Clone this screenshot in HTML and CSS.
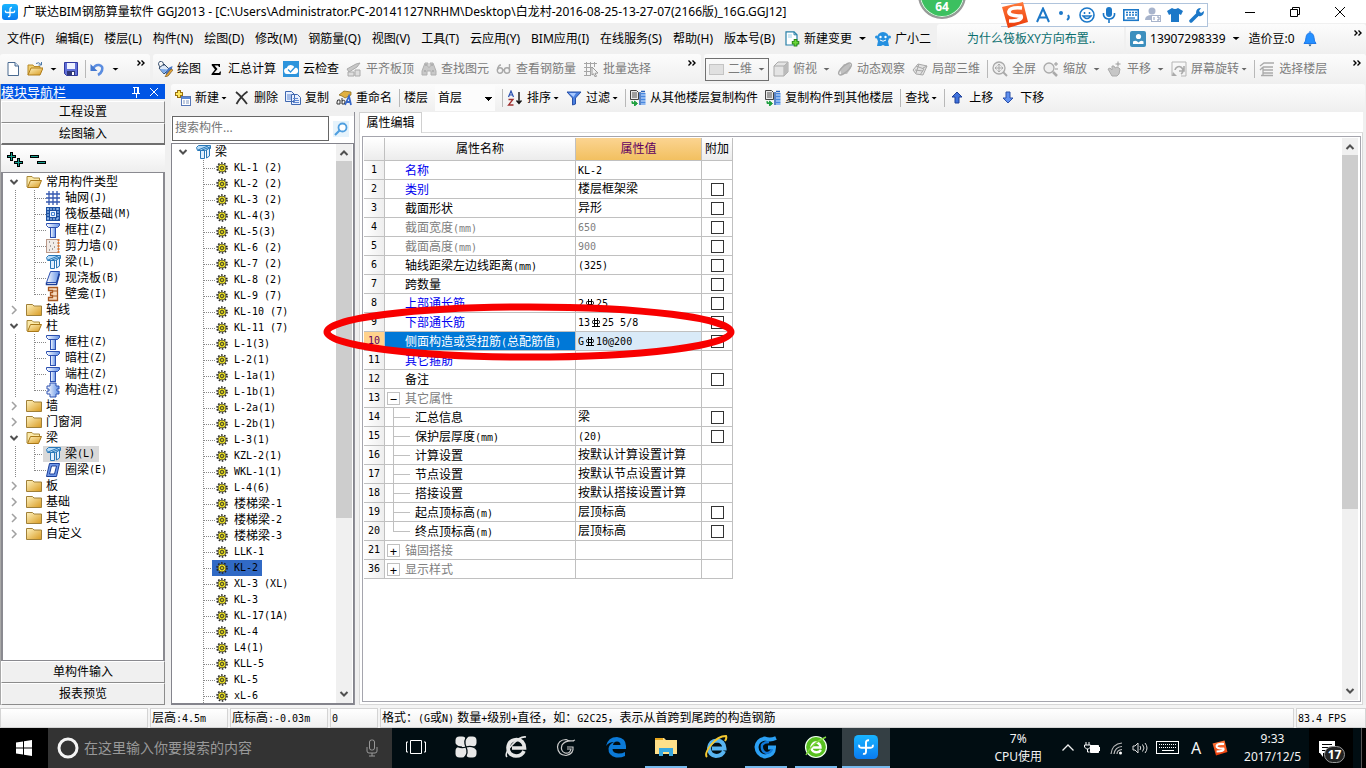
FILE: index.html
```html
<!DOCTYPE html>
<html lang="zh-CN">
<head>
<meta charset="utf-8">
<title>广联达BIM钢筋算量软件 GGJ2013</title>
<link rel="stylesheet" href="styles.css">
</head>
<body>
<svg class="defs" aria-hidden="true">
  <defs>
    <linearGradient id="gold" x1="0" y1="0" x2="1" y2="1"><stop offset="0" stop-color="#fff3c0"/><stop offset="1" stop-color="#d89a20"/></linearGradient>
    <linearGradient id="blue" x1="0" y1="0" x2="1" y2="0"><stop offset="0" stop-color="#fff"/><stop offset="1" stop-color="#5f8fe6"/></linearGradient>
    <linearGradient id="sky" x1="0" y1="0" x2="0" y2="1"><stop offset="0" stop-color="#18b4ff"/><stop offset="1" stop-color="#0a7bf0"/></linearGradient>
    <linearGradient id="flame" x1="0" y1="0" x2="0" y2="1"><stop offset="0" stop-color="#ff7a3c"/><stop offset="1" stop-color="#ea3a08"/></linearGradient>
  </defs>
  <symbol id="app" viewBox="0 0 16 16"><rect width="16" height="16" rx="3" fill="url(#sky)"/><path d="M8 10.500V5Q8 3.300 10 3.500M3.500 6.500Q3 8.500 5 8.500H11Q13 8.500 12.500 6.500M8 8.500V11Q8 13 6 12.500" fill="none" stroke="#fff" stroke-width="1.300"/></symbol>
  <symbol id="new" viewBox="0 0 16 16"><path d="M3 1.500h7l3.500 3.500v9.500H3z" fill="#fff" stroke="#4a6a90"/><path d="M10 1.500v3.500h3.500" fill="#cfe0f4" stroke="#4a6a90"/></symbol>
  <symbol id="open" viewBox="0 0 16 16"><path d="M1 14V4h5l1 1.500h6V7" fill="#f0cf70" stroke="#b88a28"/><path d="M1 14l3-7h12l-3 7z" fill="url(#gold)" stroke="#b07c18"/><path d="M9 2.500q3-2 5 1M14.500 1v3h-3" fill="none" stroke="#4b78a8"/></symbol>
  <symbol id="save" viewBox="0 0 16 16"><path d="M1.500 1.500h13v13h-11l-2-2z" fill="#6070d8" stroke="#3038a0"/><rect x="4" y="2" width="8" height="6" fill="#eef2ff"/><rect x="4" y="10" width="8" height="4.500" fill="#303878"/><rect x="9" y="11" width="2" height="3" fill="#fff"/></symbol>
  <symbol id="undo" viewBox="0 0 16 16"><path d="M4 8Q6 3.500 10 4Q14.500 5 13 9.500Q12 12.500 9 14" fill="none" stroke="#5b8de0" stroke-width="2.600"/><path d="M1.500 3v7h7z" fill="#4478d0"/></symbol>
  <symbol id="paint" viewBox="0 0 16 16"><path d="M2 7l5-4 5 5-5 5z" fill="#dce8f8" stroke="#304868"/><path d="M3 6Q0 2 3 .5T7 5" fill="none" stroke="#304868"/><path d="M3 8l8 .5-4.500 4z" fill="#7aa8e8"/><path d="M15.500 5q-6 2-7 8l2 2q4-2 5-10z" fill="#4878c8"/><path d="M9 14l5-6 2 1-5 6-3 1z" fill="#e8a838" stroke="#705020" stroke-width=".6"/></symbol>
  <symbol id="sigma" viewBox="0 0 16 16"><path d="M4 3h8v3h-1l-1-1.500H6.500L9.500 8l-3.500 4h5l1-1.500h1l-.5 3.500H3.500v-1L7 8.500 3.500 4z" fill="#000"/></symbol>
  <symbol id="cloud" viewBox="0 0 16 16"><rect width="16" height="16" fill="#2d94dc"/><path d="M4.500 13a3 3 0 0 1-.8-6 4.300 4.300 0 0 1 8-.5 3.200 3.200 0 0 1 .3 6.500z" fill="#fff"/><path d="M5 8.500l2.500 2.500L13 5" fill="none" stroke="#2d94dc" stroke-width="1.300"/></symbol>
  <symbol id="slab" viewBox="0 0 16 16"><path d="M1 8l9-5 4-1-3 4-8 5z" fill="#c8c8c8" stroke="#aaa"/><path d="M2 11h6v4H2zM9 9h5v6H9z" fill="#ddd" stroke="#aaa"/></symbol>
  <symbol id="binoc" viewBox="0 0 16 16"><path d="M4 2h3v4h2V2h3l3 8v4h-5v-4H6v4H1v-4z" fill="#c8c8c8" stroke="#b0b0b0"/><path d="M3 10h2M11 10h2M4 4h2M10 4h2" stroke="#999"/></symbol>
  <symbol id="glasses" viewBox="0 0 16 16"><g fill="none" stroke="#a8a8a8" stroke-width="1.400"><circle cx="4" cy="9.500" r="2.700"/><circle cx="11" cy="9.500" r="2.700"/><path d="M1.500 9Q2 4 5 4M13.500 10V3M7 9h1.500"/></g></symbol>
  <symbol id="batch" viewBox="0 0 16 16"><path d="M1 2.500h13M1 6.500h8M1 10.500h7M1 14.500h7M3.500 1v14M7.500 1v14M11.500 1v5" stroke="#a5a5a5" fill="none"/><path d="M9 6l6 6-3 .3 1.500 3-1.500.5-1.500-3L9 14z" fill="#f4f4f4" stroke="#999"/></symbol>
  <symbol id="cube" viewBox="0 0 16 16"><path d="M1 5l4-4h10v10l-4 4H1z" fill="#e4e4e4" stroke="#aaa"/><path d="M1 5h10v10M11 5l4-4" fill="none" stroke="#aaa"/><path d="M11 5l4-4v10l-4 4z" fill="#bbb"/></symbol>
  <symbol id="orbit" viewBox="0 0 16 16"><path d="M3 8l4-5h6l1 4-4 6H4z" fill="#c0c0c0"/><ellipse cx="8" cy="8" rx="8" ry="3" transform="rotate(-42 8 8)" fill="none" stroke="#aaa" stroke-width="1.300"/></symbol>
  <symbol id="part3" viewBox="0 0 16 16"><path d="M1 9l5-6 9 2-4 9-7-1z" fill="#e2e2e2" stroke="#a8a8a8"/><path d="M4 5l8 3-4 6M7 3L4 12M15 5l-4 2M3 9l8 1" fill="none" stroke="#a8a8a8"/></symbol>
  <symbol id="full" viewBox="0 0 16 16"><circle cx="7" cy="7" r="6" fill="#eee" stroke="#aaa" stroke-width="1.300"/><path d="M7 3v8M3 7h8M5.500 4.500L7 3l1.500 1.500M5.500 9.500L7 11l1.500-1.500M4.500 5.500L3 7l1.500 1.500M9.500 5.500L11 7 9.500 8.500" fill="none" stroke="#aaa"/><path d="M11 11l4 4" stroke="#aaa" stroke-width="2"/></symbol>
  <symbol id="zoom" viewBox="0 0 16 16"><circle cx="6" cy="7" r="5" fill="#eee" stroke="#aaa" stroke-width="1.300"/><path d="M10 11l4 4" stroke="#aaa" stroke-width="2.500"/><path d="M11 3h4M13 1v4M12 8h3" stroke="#999"/></symbol>
  <symbol id="hand" viewBox="0 0 16 16"><path d="M1 8l2-1 2 2V5h2l1 2 2-1 2 1 1 1-1 5-2 2H5z" fill="#c6c6c6" stroke="#aaa"/><path d="M11 .5v5M8.500 3h5" stroke="#999"/></symbol>
  <symbol id="rot" viewBox="0 0 16 16"><path d="M1 1h14v14h-5M1 15V1" fill="none" stroke="#b5b5b5"/><path d="M4 9a4 4 0 1 1 6 4M13 5v5h-5" fill="none" stroke="#aaa" stroke-width="1.600"/><path d="M1 15l1-4 4 4z" fill="#aaa"/></symbol>
  <symbol id="floors" viewBox="0 0 16 16"><path d="M1 5l4-3h10M4 6h10M4 9h10M1 9l3-3M4 12h10M2 14.500h12M4 6v8" fill="none" stroke="#aaa" stroke-width="1.300"/></symbol>
  <symbol id="doc" viewBox="0 0 16 16"><path d="M2 .8h8l3 3V14H2z" fill="#fff" stroke="#2880a8" stroke-width="1.200"/><path d="M4 3h4v4H4z" fill="#cfe8f4"/><path d="M10 .8v3h3" fill="none" stroke="#2880a8"/><path d="M11.500 8v7.500M7.800 11.700h7.500" stroke="#288818" stroke-width="3.600"/><path d="M11.500 9v5.500M8.800 11.700h5.500" stroke="#6bd838" stroke-width="1.800"/></symbol>
  <symbol id="mascot" viewBox="0 0 16 16"><circle cx="8" cy="7" r="6" fill="#2590e0"/><circle cx="1.500" cy="6" r="1.500" fill="#2590e0"/><circle cx="14.500" cy="6" r="1.500" fill="#2590e0"/><path d="M3 10h10l1 5h-4l-2-1-2 1H2z" fill="#2590e0"/><circle cx="5.500" cy="6" r="1.200" fill="#fff"/><circle cx="10.500" cy="6" r="1.200" fill="#fff"/><path d="M5 9q3 2.500 6 0" fill="none" stroke="#fff"/></symbol>
  <symbol id="user" viewBox="0 0 16 16"><rect width="16" height="16" rx="2" fill="#3c8fbe"/><circle cx="8.500" cy="5.500" r="2.600" fill="#fff"/><path d="M3 13v-2.500q3-2 5.500 1 2.500-3 5-1V13z" fill="#fff"/></symbol>
  <symbol id="bell" viewBox="0 0 16 16"><path d="M8 0v2M2 12.500q2-2 2-6Q4.500 2 8 2t4 4.500q0 4 2 6z" fill="#2590ff" stroke="#1f78e8"/><path d="M6.500 13.500h3l-1.500 2z" fill="#0f4878"/></symbol>
  <symbol id="add" viewBox="0 0 16 16"><path d="M4 0v8M0 4h8" stroke="#987010" stroke-width="4"/><path d="M4 1v6M1 4h6" stroke="#ffe860" stroke-width="2"/><rect x="6.500" y="6.500" width="9" height="9" fill="#fff" stroke="#5878b8"/><path d="M7 8h8" stroke="#5888d8" stroke-width="2"/><path d="M8 11h2M11 11h3M8 13h2M11 13h3" stroke="#8098c0"/></symbol>
  <symbol id="del" viewBox="0 0 16 16"><path d="M2 2q5 4 11 12M13.500 1.500Q7 6 2.500 14" fill="none" stroke="#333" stroke-width="1.800"/></symbol>
  <symbol id="copy" viewBox="0 0 16 16"><path d="M.5 1.500h6l3 3v7h-9zM6.500 4.500h6l3 3v7h-9z" fill="#e8f0ff" stroke="#4068b0"/><path d="M2 5h4M2 7h4M2 9h4M8 8.500h5M8 10.500h6M8 12.500h6" stroke="#6088d0"/></symbol>
  <symbol id="rename" viewBox="0 0 16 16"><path d="M3 5l5-4 7 1v3l-6 3-3-2z" fill="#e0b040" stroke="#806010" stroke-width=".7"/><path d="M1 12q0-3 3-2v4H1zM6 8v6M6 11q3-2 3 1t-3 2" fill="none" stroke="#333"/><path d="M9 15l4-9 2 9M10.500 12H15" fill="none" stroke="#3868c8" stroke-width="1.800"/></symbol>
  <symbol id="sort" viewBox="0 0 16 16"><path d="M1.500 7l2.500-6 2.500 6M2.500 5h3" fill="none" stroke="#2850b0" stroke-width="1.200"/><path d="M1.500 9.500H6L1.500 15H6.500" fill="none" stroke="#a03030" stroke-width="1.300"/><path d="M12 2v11M9.500 10.500l2.500 3 2.500-3" fill="none" stroke="#111" stroke-width="1.400"/></symbol>
  <symbol id="filter" viewBox="0 0 16 16"><path d="M1 2h14l-5.500 6v6l-3 1V8z" fill="#4a80e0" stroke="#2850a8"/><path d="M3 3h7L7.500 7z" fill="#a8c8ff"/></symbol>
  <symbol id="fcopy" viewBox="0 0 16 16"><path d="M.5.500h6l2 2v7h-8z" fill="#e8e8e8" stroke="#444"/><path d="M2 3h5M2 5h5M2 7h5" stroke="#555"/><path d="M11 1.500h4M10 2v13" stroke="#2860b8" stroke-width="1.500"/><path d="M11 3h4.500v12H11z" fill="#4888e0"/><path d="M11 5h5M11 8h5M11 11h5M11 14h5" stroke="#d8e8ff"/><path d="M2 11v2.500h3M4.500 11l3 2.500-3 2.500z" fill="#20a040" stroke="#20a040"/></symbol>
  <symbol id="up" viewBox="0 0 16 16"><path d="M8 2l5 5h-3v6H6V7H3z" fill="#3f72dc" stroke="#1c3f98"/></symbol>
  <symbol id="down" viewBox="0 0 16 16"><path d="M8 13L3 8h3V2h4v6h3z" fill="#5f90f0" stroke="#2c50a8"/></symbol>
  <symbol id="pin" viewBox="0 0 16 16"><path d="M5 3.500h6M6.500 3v6M9.500 3v6M10.500 3v6M4 9.500h8M8.500 9v5" stroke="#fff" fill="none"/></symbol>
  <symbol id="cross" viewBox="0 0 16 16"><path d="M4 4l8 8M12 4l-8 8" stroke="currentColor"/></symbol>
  <symbol id="fopen" viewBox="0 0 16 16"><path d="M1 13V2.500h5l1.500 1.500h6V7" fill="#fbe9a8" stroke="#a88838"/><path d="M1.500 13.500l3-7h11l-3 7z" fill="url(#gold)" stroke="#a87818"/></symbol>
  <symbol id="fclose" viewBox="0 0 16 16"><path d="M.5 13.500v-11h6L8 4h7.500v9.500z" fill="url(#gold)" stroke="#a08038"/></symbol>
  <symbol id="axis" viewBox="0 0 16 16"><path d="M4 1v14M8 1v14M12 1v14M1 4h14M1 8h14M1 12h14" stroke="#3558b0" stroke-width="1.300"/></symbol>
  <symbol id="raft" viewBox="0 0 16 16"><rect x="1" y="1" width="14" height="14" fill="#1c50a0"/><path d="M2 3h12M2 13h12M3 2v12M13 2v12" stroke="#b8d8ff" stroke-dasharray="2 1"/><rect x="5" y="5" width="6" height="6" fill="#eaf4ff"/><path d="M6.500 6.500h3v3h-3z" fill="none" stroke="#4080d0"/></symbol>
  <symbol id="col" viewBox="0 0 16 16"><path d="M1.500 1.500h13v2l-2 2h-9l-2-2z" fill="url(#blue)" stroke="#2c50b0"/><rect x="5.500" y="5.500" width="5" height="10" fill="url(#blue)" stroke="#2c50b0"/></symbol>
  <symbol id="shear" viewBox="0 0 16 16"><rect x="1.500" y="1.500" width="12" height="13" fill="#f2ece8" stroke="#b89888"/><path d="M13.500 1v14" stroke="#d87838" stroke-width="2" stroke-dasharray="2 1"/><path d="M4 4h1M8 5h1M5 8h1M9 9h1M4 12h1M7 11h1" stroke="#555"/></symbol>
  <symbol id="beam" viewBox="0 0 16 16"><path d="M1.500 3.500l2-2h12v3l-5 2h-8z" fill="#b8dcf8" stroke="#2878b8"/><path d="M3 6l10-4M7 6l8-3" stroke="#2878b8"/><path d="M5.500 6.500h4v8h-4zM11.500 6l3-2v8l-3 2z" fill="#dff0ff" stroke="#2878b8"/></symbol>
  <symbol id="plate" viewBox="0 0 16 16"><path d="M5.500 1.500h9l-3 11h-10z" fill="url(#blue)" stroke="#2c50b0"/><path d="M1.500 12.500v2h10l3-11" fill="none" stroke="#1c3f98" stroke-width="1.500"/></symbol>
  <symbol id="niche" viewBox="0 0 16 16"><path d="M3.500 1.500h9v13h-9v-3h4v-2h-2v-3h2v-2h-4z" fill="#f8dcc0" stroke="#a85820" stroke-width="1.300"/><path d="M8 5h4M8 10h4" stroke="#a85820"/></symbol>
  <symbol id="ccol" viewBox="0 0 16 16"><path d="M5 1h6v3h3v3h-2v2h2v3h-3v3H5v-3H2V9h2V7H2V4h3z" fill="url(#blue)" stroke="#2c50b0"/></symbol>
  <symbol id="ring" viewBox="0 0 16 16"><path d="M4.500 1.500h10l-3 13h-10z" fill="#6f98e8" stroke="#1c3f98"/><path d="M6.500 4h5L9.500 12h-5z" fill="#fff" stroke="#1c3f98"/></symbol>
  <symbol id="gear" viewBox="0 0 12 12"><circle cx="6" cy="6" r="5" fill="none" stroke="#222" stroke-width="1.600" stroke-dasharray="1.600 1.540"/><circle cx="6" cy="6" r="4" fill="#fff21c" stroke="#333" stroke-width=".7"/><path d="M6 2v8M2 6h8M3.500 3.500l5 5M8.500 3.500l-5 5" stroke="#554" stroke-width=".6"/><circle cx="6" cy="6" r="1.500" fill="#fff21c" stroke="#222" stroke-width=".8"/></symbol>
  <symbol id="rebar" viewBox="0 0 12 12"><path d="M4.500 2v8M7.500 2v8M2 10.500h8" stroke="currentColor" fill="none"/><rect x="2.500" y="4.500" width="7" height="3" rx="1" stroke="currentColor" fill="none"/></symbol>
  <symbol id="mag" viewBox="0 0 16 16"><rect width="16" height="16" fill="#e6f3fb"/><circle cx="9.500" cy="6.500" r="4" fill="#fff" stroke="#4f9fe0" stroke-width="1.800"/><path d="M6.500 9.500L2 14" stroke="#4f9fe0" stroke-width="2.200"/></symbol>
  <symbol id="cu" viewBox="0 0 16 16"><path d="M4.500 10L8 6.500l3.500 3.500" fill="none" stroke="#505050" stroke-width="2"/></symbol>
  <symbol id="cd" viewBox="0 0 16 16"><path d="M4.500 6L8 9.500 11.500 6" fill="none" stroke="#505050" stroke-width="2"/></symbol>
  <symbol id="cr" viewBox="0 0 16 16"><path d="M6 4l4 4-4 4" fill="none" stroke="#a0a0a0" stroke-width="1.500"/></symbol>
  <symbol id="more" viewBox="0 0 8 8"><path d="M.5 1.500L3 4 .5 6.500M4.500 1.500L7 4 4.500 6.500" fill="none" stroke="#000" stroke-width="1.400"/></symbol>
  <symbol id="sogou" viewBox="0 0 28 28"><path d="M1 6l21-5 5 20-20 6z" fill="url(#flame)"/><path d="M21 7Q9 6 8 10.500T20 15q2 5-12 5" fill="none" stroke="#fff" stroke-width="3.600"/></symbol>
</svg>

<div class="app">
  <header class="title">
    <svg class="i16"><use href="#app"/></svg>
    <h1>广联达BIM钢筋算量软件 GGJ2013 - [C:\Users\Administrator.PC-20141127NRHM\Desktop\白龙村-2016-08-25-13-27-07(2166版)_16G.GGJ12]</h1>
    <div class="wins">
      <button aria-label="最小化"><svg class="i12" viewBox="0 0 12 12"><path d="M1 6.500h10" stroke="#000"/></svg></button>
      <button aria-label="还原"><svg class="i12" viewBox="0 0 12 12"><path d="M1.500 3.500h7v7h-7zM3.500 3.500v-2h7v7h-2" fill="none" stroke="#000"/></svg></button>
      <button aria-label="关闭"><svg class="i12" viewBox="0 0 12 12"><path d="M1 1l10 10M11 1L1 11" stroke="#000"/></svg></button>
    </div>
  </header>

  <nav class="menu">
    <button>文件(F)</button><button>编辑(E)</button><button>楼层(L)</button><button>构件(N)</button><button>绘图(D)</button><button>修改(M)</button><button>钢筋量(Q)</button><button>视图(V)</button><button>工具(T)</button><button>云应用(Y)</button><button>BIM应用(I)</button><button>在线服务(S)</button><button>帮助(H)</button><button>版本号(B)</button>
    <button class="tb"><svg class="i16"><use href="#doc"/></svg>新建变更<i class="car"></i></button>
    <button class="tb"><svg class="i16"><use href="#mascot"/></svg>广小二</button>
    <div class="strip news"><a href="#">为什么筏板XY方向布置..</a></div>
    <div class="strip acct">
      <button class="tb"><svg class="i16"><use href="#user"/></svg>13907298339<i class="car"></i></button>
      <span>造价豆:0</span>
      <button class="tb" aria-label="通知"><svg class="i16"><use href="#bell"/></svg></button>
      <svg class="more"><use href="#more"/></svg>
    </div>
  </nav>

  <div class="bars">
    <div class="strip g1">
      <button class="tb" aria-label="新建"><svg class="i16"><use href="#new"/></svg></button>
      <button class="tb" aria-label="打开"><svg class="i16"><use href="#open"/></svg><i class="car"></i></button>
      <button class="tb" aria-label="保存"><svg class="i16"><use href="#save"/></svg></button>
      <i class="sep"></i>
      <button class="tb" aria-label="撤销"><svg class="i16"><use href="#undo"/></svg><i class="car"></i></button>
      <svg class="more"><use href="#more"/></svg>
    </div>
    <div class="strip g2">
      <button class="tb"><svg class="i16"><use href="#paint"/></svg>绘图</button>
      <button class="tb"><svg class="i16"><use href="#sigma"/></svg>汇总计算</button>
      <button class="tb"><svg class="i16"><use href="#cloud"/></svg>云检查</button>
      <button class="tb off"><svg class="i16"><use href="#slab"/></svg>平齐板顶</button>
      <button class="tb off"><svg class="i16"><use href="#binoc"/></svg>查找图元</button>
      <button class="tb off"><svg class="i16"><use href="#glasses"/></svg>查看钢筋量</button>
      <button class="tb off"><svg class="i16"><use href="#batch"/></svg>批量选择</button>
      <svg class="more"><use href="#more"/></svg>
    </div>
    <div class="strip g3">
      <button class="tb off view"><i class="swatch"></i>二维<i class="car"></i></button>
      <button class="tb off"><svg class="i16"><use href="#cube"/></svg>俯视<i class="car"></i></button>
      <button class="tb off"><svg class="i16"><use href="#orbit"/></svg>动态观察</button>
      <button class="tb off"><svg class="i16"><use href="#part3"/></svg>局部三维</button>
      <i class="sep"></i>
      <button class="tb off"><svg class="i16"><use href="#full"/></svg>全屏</button>
      <button class="tb off"><svg class="i16"><use href="#zoom"/></svg>缩放<i class="car"></i></button>
      <button class="tb off"><svg class="i16"><use href="#hand"/></svg>平移<i class="car"></i></button>
      <button class="tb off tight"><svg class="i16"><use href="#rot"/></svg>屏幕旋转<i class="car"></i></button>
      <i class="sep"></i>
      <button class="tb off"><svg class="i16"><use href="#floors"/></svg>选择楼层</button>
      <svg class="more"><use href="#more"/></svg>
    </div>
  </div>

  <main class="work">
    <aside class="nav">
      <div class="navhead"><span>模块导航栏</span><button aria-label="固定"><svg class="i16"><use href="#pin"/></svg></button><button aria-label="关闭"><svg class="i16"><use href="#cross"/></svg></button></div>
      <button class="navbtn">工程设置</button>
      <button class="navbtn down">绘图输入</button>
      <div class="exp">
        <button aria-label="全部展开"><svg viewBox="0 0 18 16"><path d="M4.500 0v9M0 4.500h9M11.500 6v9M7 10.500h9" stroke="#000" stroke-width="3"/><path d="M4.500 1v7M1 4.500h7M11.500 7v7M8 10.500h7" stroke="#18a090"/></svg></button>
        <button aria-label="全部折叠"><svg viewBox="0 0 18 16"><path d="M0 4.500h9M7 10.500h9" stroke="#000" stroke-width="3"/><path d="M1 4.500h7M8 10.500h7" stroke="#18a090"/></svg></button>
      </div>
      <ul class="tree modules">
        <li class="root"><svg class="i16"><use href="#cd"/></svg><svg class="i16"><use href="#fopen"/></svg>常用构件类型</li>
        <li class="kid"><span><svg class="i16"><use href="#axis"/></svg>轴网<b>(J)</b></span></li>
        <li class="kid"><span><svg class="i16"><use href="#raft"/></svg>筏板基础<b>(M)</b></span></li>
        <li class="kid"><span><svg class="i16"><use href="#col"/></svg>框柱<b>(Z)</b></span></li>
        <li class="kid"><span><svg class="i16"><use href="#shear"/></svg>剪力墙<b>(Q)</b></span></li>
        <li class="kid"><span><svg class="i16"><use href="#beam"/></svg>梁<b>(L)</b></span></li>
        <li class="kid"><span><svg class="i16"><use href="#plate"/></svg>现浇板<b>(B)</b></span></li>
        <li class="kid last"><span><svg class="i16"><use href="#niche"/></svg>壁龛<b>(I)</b></span></li>
        <li class="root"><svg class="i16"><use href="#cr"/></svg><svg class="i16"><use href="#fclose"/></svg>轴线</li>
        <li class="root"><svg class="i16"><use href="#cd"/></svg><svg class="i16"><use href="#fopen"/></svg>柱</li>
        <li class="kid"><span><svg class="i16"><use href="#col"/></svg>框柱<b>(Z)</b></span></li>
        <li class="kid"><span><svg class="i16"><use href="#col"/></svg>暗柱<b>(Z)</b></span></li>
        <li class="kid"><span><svg class="i16"><use href="#col"/></svg>端柱<b>(Z)</b></span></li>
        <li class="kid last"><span><svg class="i16"><use href="#ccol"/></svg>构造柱<b>(Z)</b></span></li>
        <li class="root"><svg class="i16"><use href="#cr"/></svg><svg class="i16"><use href="#fclose"/></svg>墙</li>
        <li class="root"><svg class="i16"><use href="#cr"/></svg><svg class="i16"><use href="#fclose"/></svg>门窗洞</li>
        <li class="root"><svg class="i16"><use href="#cd"/></svg><svg class="i16"><use href="#fopen"/></svg>梁</li>
        <li class="kid"><span class="cur"><svg class="i16"><use href="#beam"/></svg>梁<b>(L)</b></span></li>
        <li class="kid last"><span><svg class="i16"><use href="#ring"/></svg>圈梁<b>(E)</b></span></li>
        <li class="root"><svg class="i16"><use href="#cr"/></svg><svg class="i16"><use href="#fclose"/></svg>板</li>
        <li class="root"><svg class="i16"><use href="#cr"/></svg><svg class="i16"><use href="#fclose"/></svg>基础</li>
        <li class="root"><svg class="i16"><use href="#cr"/></svg><svg class="i16"><use href="#fclose"/></svg>其它</li>
        <li class="root"><svg class="i16"><use href="#cr"/></svg><svg class="i16"><use href="#fclose"/></svg>自定义</li>
      </ul>
      <button class="navbtn">单构件输入</button>
      <button class="navbtn">报表预览</button>
    </aside>

    <section class="right">
      <div class="strip g4">
        <button class="tb tight"><svg class="i16"><use href="#add"/></svg>新建<i class="car"></i></button>
        <button class="tb"><svg class="i16"><use href="#del"/></svg>删除</button>
        <button class="tb"><svg class="i16"><use href="#copy"/></svg>复制</button>
        <button class="tb"><svg class="i16"><use href="#rename"/></svg>重命名</button>
        <i class="sep"></i>
        <label class="floor" for="floor">楼层</label>
        <select id="floor"><option>首层</option></select>
        <i class="sep"></i>
        <button class="tb tight"><svg class="i16"><use href="#sort"/></svg>排序<i class="car"></i></button>
        <button class="tb tight"><svg class="i16"><use href="#filter"/></svg>过滤<i class="car"></i></button>
        <i class="sep"></i>
        <button class="tb"><svg class="i16"><use href="#fcopy"/></svg>从其他楼层复制构件</button>
        <button class="tb"><svg class="i16"><use href="#fcopy"/></svg>复制构件到其他楼层</button>
        <i class="sep"></i>
        <button class="tb tight">查找<i class="car"></i></button>
        <i class="sep"></i>
        <button class="tb"><svg class="i16"><use href="#up"/></svg>上移</button>
        <button class="tb"><svg class="i16"><use href="#down"/></svg>下移</button>
      </div>
      <div class="cols">
        <div class="list">
          <form class="find"><input type="text" placeholder="搜索构件..." aria-label="搜索构件"><button type="button" aria-label="搜索"><svg class="i16"><use href="#mag"/></svg></button></form>
          <div class="listbox">
            <ul class="tree parts">
              <li class="root"><svg class="i16"><use href="#cd"/></svg><svg class="i16"><use href="#beam"/></svg>梁</li>
              <li class="kid"><span><svg><use href="#gear"/></svg><b>KL-1 (2)</b></span></li>
              <li class="kid"><span><svg><use href="#gear"/></svg><b>KL-2 (2)</b></span></li>
              <li class="kid"><span><svg><use href="#gear"/></svg><b>KL-3 (2)</b></span></li>
              <li class="kid"><span><svg><use href="#gear"/></svg><b>KL-4(3)</b></span></li>
              <li class="kid"><span><svg><use href="#gear"/></svg><b>KL-5(3)</b></span></li>
              <li class="kid"><span><svg><use href="#gear"/></svg><b>KL-6 (2)</b></span></li>
              <li class="kid"><span><svg><use href="#gear"/></svg><b>KL-7 (2)</b></span></li>
              <li class="kid"><span><svg><use href="#gear"/></svg><b>KL-8 (2)</b></span></li>
              <li class="kid"><span><svg><use href="#gear"/></svg><b>KL-9 (7)</b></span></li>
              <li class="kid"><span><svg><use href="#gear"/></svg><b>KL-10 (7)</b></span></li>
              <li class="kid"><span><svg><use href="#gear"/></svg><b>KL-11 (7)</b></span></li>
              <li class="kid"><span><svg><use href="#gear"/></svg><b>L-1(3)</b></span></li>
              <li class="kid"><span><svg><use href="#gear"/></svg><b>L-2(1)</b></span></li>
              <li class="kid"><span><svg><use href="#gear"/></svg><b>L-1a(1)</b></span></li>
              <li class="kid"><span><svg><use href="#gear"/></svg><b>L-1b(1)</b></span></li>
              <li class="kid"><span><svg><use href="#gear"/></svg><b>L-2a(1)</b></span></li>
              <li class="kid"><span><svg><use href="#gear"/></svg><b>L-2b(1)</b></span></li>
              <li class="kid"><span><svg><use href="#gear"/></svg><b>L-3(1)</b></span></li>
              <li class="kid"><span><svg><use href="#gear"/></svg><b>KZL-2(1)</b></span></li>
              <li class="kid"><span><svg><use href="#gear"/></svg><b>WKL-1(1)</b></span></li>
              <li class="kid"><span><svg><use href="#gear"/></svg><b>L-4(6)</b></span></li>
              <li class="kid"><span><svg><use href="#gear"/></svg>楼梯梁<b>-1</b></span></li>
              <li class="kid"><span><svg><use href="#gear"/></svg>楼梯梁<b>-2</b></span></li>
              <li class="kid"><span><svg><use href="#gear"/></svg>楼梯梁<b>-3</b></span></li>
              <li class="kid"><span><svg><use href="#gear"/></svg><b>LLK-1</b></span></li>
              <li class="kid"><span class="sel"><svg><use href="#gear"/></svg><b>KL-2</b></span></li>
              <li class="kid"><span><svg><use href="#gear"/></svg><b>XL-3 (XL)</b></span></li>
              <li class="kid"><span><svg><use href="#gear"/></svg><b>KL-3</b></span></li>
              <li class="kid"><span><svg><use href="#gear"/></svg><b>KL-17(1A)</b></span></li>
              <li class="kid"><span><svg><use href="#gear"/></svg><b>KL-4</b></span></li>
              <li class="kid"><span><svg><use href="#gear"/></svg><b>L4(1)</b></span></li>
              <li class="kid"><span><svg><use href="#gear"/></svg><b>KLL-5</b></span></li>
              <li class="kid"><span><svg><use href="#gear"/></svg><b>KL-5</b></span></li>
              <li class="kid"><span><svg><use href="#gear"/></svg><b>xL-6</b></span></li>
            </ul>
            <div class="scroll"><svg class="i16"><use href="#cu"/></svg><div class="track"><i class="thumb t1"></i></div><svg class="i16"><use href="#cd"/></svg></div>
          </div>
        </div>
        <div class="editor">
          <div class="tabs"><button class="tab">属性编辑</button></div>
          <div class="page">
            <div class="frame">
              <table class="props">
                <thead><tr><th class="n"></th><th class="a">属性名称</th><th class="v">属性值</th><th class="c">附加</th></tr></thead>
                <tbody>
                  <tr><th>1</th><td class="key">名称</td><td><b>KL-2</b></td><td></td></tr>
                  <tr><th>2</th><td class="key">类别</td><td>楼层框架梁</td><td><input type="checkbox" aria-label="类别 附加"></td></tr>
                  <tr><th>3</th><td>截面形状</td><td>异形</td><td><input type="checkbox" aria-label="截面形状 附加"></td></tr>
                  <tr class="dim"><th>4</th><td>截面宽度<b>(mm)</b></td><td><b>650</b></td><td><input type="checkbox" aria-label="截面宽度 附加"></td></tr>
                  <tr class="dim"><th>5</th><td>截面高度<b>(mm)</b></td><td><b>900</b></td><td><input type="checkbox" aria-label="截面高度 附加"></td></tr>
                  <tr><th>6</th><td>轴线距梁左边线距离<b>(mm)</b></td><td><b>(325)</b></td><td><input type="checkbox" aria-label="轴线距离 附加"></td></tr>
                  <tr><th>7</th><td>跨数量</td><td></td><td><input type="checkbox" aria-label="跨数量 附加"></td></tr>
                  <tr><th>8</th><td class="key">上部通长筋</td><td><b>2</b><svg class="rb"><use href="#rebar"/></svg><b>25</b></td><td><input type="checkbox" aria-label="上部通长筋 附加"></td></tr>
                  <tr><th>9</th><td class="key">下部通长筋</td><td><b>13</b><svg class="rb"><use href="#rebar"/></svg><b>25 5/8</b></td><td><input type="checkbox" aria-label="下部通长筋 附加"></td></tr>
                  <tr class="active"><th>10</th><td>侧面构造或受扭筋<b>(</b>总配筋值<b>)</b></td><td><b>G</b><svg class="rb"><use href="#rebar"/></svg><b>10@200</b></td><td><input type="checkbox" aria-label="侧面构造筋 附加"></td></tr>
                  <tr><th>11</th><td class="key">其它箍筋</td><td></td><td></td></tr>
                  <tr><th>12</th><td>备注</td><td></td><td><input type="checkbox" aria-label="备注 附加"></td></tr>
                  <tr class="group dim"><th>13</th><td><button aria-label="折叠">−</button>其它属性</td><td></td><td></td></tr>
                  <tr class="sub"><th>14</th><td>汇总信息</td><td>梁</td><td><input type="checkbox" aria-label="汇总信息 附加"></td></tr>
                  <tr class="sub"><th>15</th><td>保护层厚度<b>(mm)</b></td><td><b>(20)</b></td><td><input type="checkbox" aria-label="保护层厚度 附加"></td></tr>
                  <tr class="sub"><th>16</th><td>计算设置</td><td>按默认计算设置计算</td><td></td></tr>
                  <tr class="sub"><th>17</th><td>节点设置</td><td>按默认节点设置计算</td><td></td></tr>
                  <tr class="sub"><th>18</th><td>搭接设置</td><td>按默认搭接设置计算</td><td></td></tr>
                  <tr class="sub"><th>19</th><td>起点顶标高<b>(m)</b></td><td>层顶标高</td><td><input type="checkbox" aria-label="起点顶标高 附加"></td></tr>
                  <tr class="sub end"><th>20</th><td>终点顶标高<b>(m)</b></td><td>层顶标高</td><td><input type="checkbox" aria-label="终点顶标高 附加"></td></tr>
                  <tr class="group dim"><th>21</th><td><button aria-label="展开">+</button>锚固搭接</td><td></td><td></td></tr>
                  <tr class="group dim"><th>36</th><td><button aria-label="展开">+</button>显示样式</td><td></td><td></td></tr>
                </tbody>
              </table>
              <div class="scroll"><svg class="i16"><use href="#cu"/></svg><div class="track"><i class="thumb t2"></i></div><svg class="i16"><use href="#cd"/></svg></div>
            </div>
          </div>
          <svg class="mark" viewBox="0 0 412 60"><ellipse cx="206" cy="30" rx="202" ry="25" fill="none" stroke="#f80000" stroke-width="7"/></svg>
        </div>
      </div>
    </section>
  </main>

  <footer class="status">
    <span class="s0"></span><span class="s1">层高<b>:4.5m</b></span><span class="s2">底标高<b>:-0.03m</b></span><span class="s3"><b>0</b></span><span class="s4">格式：<b>(G</b>或<b>N)</b> 数量<b>+</b>级别<b>+</b>直径，如：<b>G2C25</b>，表示从首跨到尾跨的构造钢筋</span><span class="s5"><b>83.4 FPS</b></span>
  </footer>

  <footer class="taskbar">
    <button class="start" aria-label="开始"><svg viewBox="0 0 16 16"><path d="M0 2.500l7-1v6H0zM8 1.300L16 0v7.500H8zM0 8.500h7v6l-7-1zM8 8.500h8V16l-8-1.300z" fill="#fff"/></svg></button>
    <label class="cortana"><svg viewBox="0 0 22 22"><circle cx="11" cy="11" r="9" fill="none" stroke="#f4f4f4" stroke-width="3"/></svg><input type="text" placeholder="在这里输入你要搜索的内容"><svg class="mic" viewBox="0 0 12 18"><rect x="3.500" y="1" width="5" height="10" rx="2" fill="none" stroke="#999"/><path d="M1 8v4q0 2 2 2h6q2 0 2-2V8M6 14v3M3 17h6" fill="none" stroke="#999"/></svg></label>
    <div class="apps">
      <button aria-label="任务视图"><svg viewBox="0 0 24 24"><path d="M6.500 5.500h11v13h-11zM4 7H2.500v10H4M20 7h1.500v10H20" fill="none" stroke="#fff"/></svg></button>
      <button aria-label="应用"><svg viewBox="0 0 24 24"><g fill="#e8e8e8"><rect x="1.500" y="1.500" width="10.500" height="10" rx="4"/><rect x="12" y="1.500" width="10.500" height="10" rx="4"/><rect x="1.500" y="12" width="10.500" height="10.500" rx="4"/><rect x="12" y="12" width="10.500" height="10.500" rx="4"/><path d="M8 8h8v8H8z"/></g><path d="M14 1Q9 5 12 12T10 23M1 9q4 5 11 3t11 3" fill="none" stroke="#010d12" stroke-width="1.300"/></svg></button>
      <button aria-label="浏览器"><svg viewBox="0 0 24 24"><path d="M20 16Q18 21 12 21Q4 20 4 12.500 5 5 12.500 4.500 20 5 20.500 13H8" fill="none" stroke="#e6e6e6" stroke-width="3.600"/><path d="M3 22Q0 19 8 10T22 2" fill="none" stroke="#e6e6e6" stroke-width="1.600"/></svg></button>
      <button aria-label="应用"><svg viewBox="0 0 24 24"><path d="M21 5Q16 7 12 4.500 4 5 3.500 12 4 20 12 20.500 20 19 19 12h-6M20 6Q11 5 8 10q-2 6 3 8 5 1 6-4h-4" fill="none" stroke="#ccc" stroke-width="1.200"/></svg></button>
      <button aria-label="Edge"><svg viewBox="0 0 24 24"><path d="M2 11Q4 2 13 2q9 1 9 9v3H8.500q0 4 6 4.500 4 0 6.500-1.500v4q-4 2-9 1.500-8-2-7.500-9Q5 9 10 7 5 7 2 11zM9 10h7.500q0-3.500-3.500-3.500T9 10z" fill="#0b7ad8"/></svg></button>
      <button class="on" aria-label="资源管理器"><svg viewBox="0 0 24 24"><path d="M1 3h9l2 2h11v14H1z" fill="#ffe08a"/><path d="M1 3h8v2H1z" fill="#e8a820"/><path d="M5 21v-8h14v8h-4v-4H9v4z" fill="#38a8e0"/></svg></button>
      <button aria-label="IE"><svg viewBox="0 0 24 24"><path d="M20 16Q18 21 12 21Q5 20 5 13 6 6 13 5.500 20 6 20.500 13.500H8" fill="none" stroke="#58b4f0" stroke-width="4"/><path d="M3 22Q0 19 7 10T22 1q1 2-1 5" fill="none" stroke="#f4c830" stroke-width="2"/></svg></button>
      <button class="on" aria-label="应用"><svg viewBox="0 0 24 24"><path d="M22 3Q16 5.500 11 3.500 3 5 2.500 12 3 20 11 21.500q9-1 9-9h-6" fill="none" stroke="#2ba0f4" stroke-width="4"/><path d="M18 14q-1 4-6 4-5-2-4-8 2-3 7-3" fill="none" stroke="#1078d8" stroke-width="2.400"/></svg></button>
      <button class="on" aria-label="安全浏览器"><svg viewBox="0 0 24 24"><circle cx="12" cy="12" r="10.500" fill="#58c020" stroke="#f0fff0" stroke-width="1.200"/><path d="M17 15q-2 3-6 2-4-1-3.500-5.500Q9 7 12.500 7.500q4 1 4 5H8" fill="none" stroke="#fff" stroke-width="2.400"/><path d="M2 20Q8 8 22 2" fill="none" stroke="#80d840" stroke-width="1.400"/></svg></button>
      <button class="on now" aria-label="广联达"><svg><use href="#app"/></svg></button>
    </div>
    <div class="tray">
      <span class="cpu">7%<br>CPU使用</span>
      <svg class="i16" viewBox="0 0 16 16"><path d="M2.500 10.500L8 5l5.500 5.500" fill="none" stroke="#eee" stroke-width="1.300"/></svg>
      <svg class="i16" viewBox="0 0 16 16"><path d="M2 2v3M5 2v3M.5 5h6v2l-2 2h-2L.5 7zM3.500 9v3h2" fill="none" stroke="#fff"/><path d="M6.500 5.500h8v7h-8z" fill="#fff" stroke="#fff"/><path d="M15.500 7v4" stroke="#fff"/></svg>
      <svg class="i16" viewBox="0 0 16 16"><g fill="none" stroke="#bbb" stroke-width="1.200"><path d="M3 14Q4 4 14 3M6 14Q7 7 14 6.500M9 14q0-4 5-4.500"/></g><circle cx="12.500" cy="13" r="1.500" fill="#fff"/></svg>
      <svg class="i16" viewBox="0 0 16 16"><path d="M1 6h2l3-3v10l-3-3H1zM8 6q1.500 2 0 4M10.500 4.500q3 3.500 0 7M13 3q4 5 0 10" fill="none" stroke="#ddd"/></svg>
      <svg class="kb" viewBox="0 0 24 14"><rect x=".5" y=".5" width="22" height="12" fill="none" stroke="#fff"/><path d="M3 3.500h18M3 6.500h18" stroke="#fff" stroke-dasharray="1 1"/><path d="M6 9.500h12" stroke="#fff"/></svg>
      <span class="ime">A</span>
      <svg class="i16"><use href="#sogou"/></svg>
      <span class="clock">9:33<br>2017/12/5</span>
      <button class="note" aria-label="通知"><svg viewBox="0 0 30 30"><path d="M2 4h16v12H6v4l-3-4H2z" fill="#fff"/><path d="M5 7.500h10M5 10.500h10M5 13.500h6" stroke="#000"/></svg><span>17</span></button>
      <i class="peek"></i>
    </div>
  </footer>
</div>

<div class="ball">64</div>
<div class="imebar">
  <svg class="logo"><use href="#sogou"/></svg>
  <svg class="i16" viewBox="0 0 16 16"><path d="M2 15L8 1.500 14 15M4 10.500h8" fill="none" stroke="#1c78c8" stroke-width="2"/></svg>
  <svg class="i16" viewBox="0 0 16 16"><circle cx="4" cy="6" r="2" fill="#1c78c8"/><path d="M11 8q2 3-1 5" fill="none" stroke="#1c78c8" stroke-width="2"/></svg>
  <svg class="i16" viewBox="0 0 16 16"><circle cx="8" cy="8" r="7" fill="none" stroke="#1c78c8" stroke-width="1.600"/><path d="M5.500 5v2M10.500 5v2M4 9q4 5 8 0z" fill="none" stroke="#1c78c8" stroke-width="1.500"/></svg>
  <svg class="i16" viewBox="0 0 16 16"><rect x="5" y="0" width="6" height="10" rx="3" fill="#1c78c8"/><path d="M2.500 6v2q1 4 5.500 4t5.500-4V6M8 12v4" fill="none" stroke="#1c78c8" stroke-width="1.600"/></svg>
  <svg class="i16" viewBox="0 0 16 16"><rect x=".8" y="2.800" width="14.500" height="10.500" fill="none" stroke="#1c78c8" stroke-width="1.600"/><path d="M3 5.500h11M3 8h11" stroke="#1c78c8" stroke-width="1.300" stroke-dasharray="2 1"/><path d="M4 11h8" stroke="#1c78c8" stroke-width="1.300"/></svg>
  <svg class="i16" viewBox="0 0 16 16"><circle cx="7" cy="4" r="3.500" fill="#a8b4cc"/><path d="M0 13q0-5 7-5 3 0 5 1v4z" fill="#a8b4cc"/><rect x="6.500" y="8.500" width="9" height="6" fill="#fff" stroke="#a8b4cc"/><path d="M9 10v3M12 10h2v3h-2" stroke="#8898b8" fill="none"/></svg>
  <svg class="i16" viewBox="0 0 16 16"><path d="M5 1q3 2 6 0l5 3-2 4-2-1v8H4V7L2 8 0 4z" fill="#1c78c8"/></svg>
  <svg class="i16" viewBox="0 0 16 16"><path d="M2 14l6-6" stroke="#1c78c8" stroke-width="3.500" stroke-linecap="round"/><path d="M12 1Q7 1 7 6q1 4 5 3 3-1 3-5l-3 2-2-2z" fill="#1c78c8"/></svg>
</div>
</body>
</html>
```
FILE: styles.css
```css
* { box-sizing: border-box; }
body, h1, ul { margin: 0; padding: 0; }
body {
  font: 12px/16px "Noto Sans", "Noto Sans CJK SC", sans-serif;
  color: #000;
  background: #f0f0f0;
  overflow: hidden;
}
button, input, select { font: inherit; color: inherit; margin: 0; padding: 0; border: 0; background: none; }
button { white-space: nowrap; }
svg { flex: none; display: block; }
b { font: 10px/14px "DejaVu Sans Mono", monospace; white-space: pre; }
.defs { position: absolute; width: 0; height: 0; }
.i16 { width: 16px; height: 16px; }
.i12 { width: 12px; height: 12px; }
.more { width: 8px; height: 8px; margin-left: auto; margin-bottom: 12px; }
.app { display: flex; flex-direction: column; height: 100vh; }

.title { display: flex; align-items: center; height: 23px; padding-left: 2px; gap: 5px; background: #fff; }
.title h1 { font-size: 12px; font-weight: 400; white-space: nowrap; }
.wins { display: flex; margin-left: auto; padding-right: 4px; }
.wins button { display: flex; justify-content: center; width: 45px; }

.menu { display: flex; align-items: center; height: 31px; padding-left: 7px; gap: 11px; }
.strip { display: flex; align-items: center; gap: 7px; background: linear-gradient(#fcfcfc, #efefef); border-radius: 3px; }
.tb { display: flex; align-items: center; gap: 4px; }
.menu .tb { margin-left: -2px; }
.car { flex: none; width: 7px; height: 3px; margin-left: 3px; background: #000; clip-path: polygon(0 0, 100% 0, 50% 100%); }
.tight .car { margin-left: -2px; width: 6px; }
.off { color: #7c7c7c; }
.off .car { background: #666; }
.sep { width: 1px; height: 18px; margin-right: -3px; background: #b8b8b8; }
.news { flex: 0 0 187px; height: 30px; padding-left: 30px; margin-left: -5px; }
.news a { color: #0b6f6f; text-decoration: none; white-space: nowrap; }
.acct { flex: 1; height: 30px; margin-left: -9px; padding: 0 4px 0 6px; gap: 9px; }

.bars { display: flex; height: 30px; gap: 3px; }
.bars .strip { padding-right: 5px; }
.g1 { flex: 0 0 150px; padding-left: 5px; gap: 6px; }
.g2 { flex: 0 0 548px; padding-left: 4px; }
.g3 { flex: 1; padding-left: 1px; }
.g3 .car { margin-left: 2px; }
.g3 .tight .car { margin-left: -2px; }
.view { height: 23px; padding: 0 3px; margin-right: -3px; border: 1px solid #707070; }
.swatch { width: 15px; height: 11px; background: #e0e0e0; border: 1px solid #c4c4c4; }

.work { display: flex; flex: 1; gap: 6px; min-height: 0; }
.nav { display: flex; flex-direction: column; flex: 0 0 165px; border-left: 1px solid #a8a8a8; }
.navhead { display: flex; align-items: center; height: 15px; margin-bottom: 2px; background: #0055e5; color: #fff; padding-right: 1px; }
.navhead span { flex: 1; font-size: 13px; }
.navhead button { width: 18px; }
.navbtn { height: 22px; flex: none; line-height: 18px; background: #f0f0f0; border: 1px solid; border-color: #fff #8c8c8c #8c8c8c #fff; }
.navbtn.down { border-color: #fff #707070 #707070 #fff; border-bottom-width: 2px; }
.exp { display: flex; align-items: center; gap: 5px; height: 27px; padding-left: 6px; border-top: 2px solid #fff; background: linear-gradient(#fff, #eee); }
.exp svg { width: 18px; height: 16px; }
.tree { list-style: none; background: #fff; overflow: hidden; }
.tree li { display: flex; align-items: center; height: 16px; white-space: nowrap; line-height: 16px; }
.tree b { line-height: 16px; }
.root .i16 + .i16 { margin-left: 4px; margin-right: 4px; }
.modules { flex: 1; min-height: 0; border: 2px solid #8a8a90; border-width: 1px 2px; padding: 1px 0 0 3px; }
.modules .kid {
  padding-left: 37px;
  background:
    repeating-linear-gradient(#888 0 1px, transparent 1px 2px) 9px 0 / 1px 100% no-repeat,
    repeating-linear-gradient(#888 0 1px, transparent 1px 2px) 28px 0 / 1px 100% no-repeat,
    repeating-linear-gradient(90deg, #888 0 1px, transparent 1px 2px) 29px 8px / 12px 1px no-repeat;
}
.modules .kid.last {
  background:
    repeating-linear-gradient(#888 0 1px, transparent 1px 2px) 9px 0 / 1px 100% no-repeat,
    repeating-linear-gradient(#888 0 1px, transparent 1px 2px) 28px 0 / 1px 9px no-repeat,
    repeating-linear-gradient(90deg, #888 0 1px, transparent 1px 2px) 29px 8px / 12px 1px no-repeat;
}
.kid span { display: flex; align-items: center; height: 16px; padding: 0 4px 0 2px; }
.modules .kid svg { margin-right: 4px; }
.cur { background: #d9d9d9; }

.right { display: flex; flex-direction: column; flex: 1; min-width: 0; }
.g4 { height: 28px; padding-left: 4px; margin-right: 1px; }
.g4 select { width: 60px; height: 26px; padding: 0 3px; appearance: none; background: linear-gradient(#000, #000) 50px 12px / 7px 1px no-repeat, linear-gradient(#000, #000) 51px 13px / 5px 1px no-repeat, linear-gradient(#000, #000) 52px 14px / 3px 1px no-repeat, linear-gradient(#000, #000) 53px 15px / 1px 1px no-repeat, #fcfcfc; }
.cols { display: flex; flex: 1; gap: 4px; min-height: 0; }
.list { display: flex; flex-direction: column; flex: 0 0 184px; padding-top: 4px; border-right: 1px solid #909098; }
.find { display: flex; align-items: center; height: 27px; background: #fff; gap: 4px; padding: 0 0 2px 1px; }
.find input { width: 157px; height: 25px; padding: 0 2px 3px; border: 1px solid #666; background: #fff; }
.find input::placeholder { color: #757575; opacity: 1; }
.listbox { display: flex; flex: 1; min-height: 0; border: 1px solid #84848c; border-width: 1px 1px 2px; background: #fff; padding-right: 1px; }
.parts { flex: 1; }
.parts .root { padding-left: 3px; }
.parts .kid {
  padding-left: 40px;
  background:
    repeating-linear-gradient(#888 0 1px, transparent 1px 2px) 31px 0 / 1px 100% no-repeat,
    repeating-linear-gradient(90deg, #888 0 1px, transparent 1px 2px) 32px 8px / 12px 1px no-repeat;
}
.parts .kid span { padding-left: 4px; }
.parts .kid svg { width: 12px; height: 12px; margin-right: 6px; }
.sel { background: #316ac5; }
.scroll { display: flex; flex-direction: column; flex: 0 0 16px; padding: 1px 0; background: #f0f0f0; }
.track { flex: 1; }
.thumb { display: block; background: #cdcdcd; }
.t1 { height: 68%; }
.t2 { height: 67%; }

.editor { display: flex; flex-direction: column; flex: 1; min-width: 0; position: relative; margin-right: 3px; }
.tabs { display: flex; height: 21px; background: #fff; border-bottom: 1px solid #dcdcdc; }
.tab { width: 63px; height: 21px; background: #fff; border: 1px solid #d0d0d0; border-bottom: 0; }
.page { flex: 1; min-height: 0; display: flex; padding: 3px 1px 2px 2px; background: #fff; border: 1px solid #d8d8d8; border-top: 0; }
.frame { flex: 1; display: flex; justify-content: space-between; align-items: flex-start; min-width: 0; padding: 1px 2px 1px 1px; border: 1px solid #a5a5ad; }
.frame .scroll { align-self: stretch; }
.mark { position: absolute; left: -36px; top: 190px; width: 412px; height: 60px; }

.props { border-collapse: separate; border-spacing: 0; table-layout: fixed; width: 369px; }
.props th, .props td { height: 19px; padding: 0 0 0 2px; border: solid #c0c0c0; border-width: 0 1px 1px 0; font-weight: 400; line-height: 16px; text-align: left; white-space: nowrap; }
.props thead th { height: 23px; padding: 0; text-align: center; background: linear-gradient(#fff, #ececec); }
.props thead th.v { background: linear-gradient(#fbd491, #f2c060); color: #600060; }
.n { width: 21px; }
.a { width: 191px; }
.v { width: 126px; }
.c { width: 31px; }
.props tbody th { padding: 0; text-align: center; font: 10px/16px "DejaVu Sans Mono", monospace; background: linear-gradient(90deg, #fff, #eee); }
.props td:nth-child(2) { padding-left: 20px; padding-top: 1px; }
.props td:last-child { padding: 0; }
.props input { appearance: none; display: block; width: 13px; height: 13px; margin: 0 auto; border: 1px solid #333; background: #fff; }
.props .key { color: #0000f0; }
.props .dim td { color: #808080; }
.props .active th { background: #ffd28c; color: #600060; }
.props .active td:nth-child(2) { background: #0078d7; color: #fff; }
.props .active td:nth-child(3) { background: #d9eaf8; }
.rb { display: inline-block; width: 12px; height: 12px; vertical-align: -2px; }
.props .group td:nth-child(2) { padding-left: 2px; }
.group button { width: 13px; height: 13px; margin-right: 5px; border: 1px solid #c0c0c0; line-height: 10px; color: #000; background: #fff; vertical-align: -1px; font-size: 13px; }
.props .sub td:nth-child(2) { padding-left: 30px; background: linear-gradient(#c0c0c0, #c0c0c0) 8px 0 / 1px 100% no-repeat, linear-gradient(#c0c0c0, #c0c0c0) 8px 9px / 17px 1px no-repeat; }
.props .end td:nth-child(2) { background: linear-gradient(#c0c0c0, #c0c0c0) 8px 0 / 1px 9px no-repeat, linear-gradient(#c0c0c0, #c0c0c0) 8px 9px / 17px 1px no-repeat; }

.status { display: flex; height: 23px; gap: 2px; padding-top: 3px; background: #f4f4f4; }
.status span { border: 1px solid #d4d4d4; padding-left: 1px; line-height: 18px; white-space: nowrap; background: linear-gradient(#fff, #f0f0f0); }
.s0 { width: 148px; }
.s1 { width: 78px; }
.s2 { width: 98px; }
.s3 { width: 48px; }
.s4 { flex: 1; }
.s5 { width: 70px; }

.taskbar { display: flex; height: 40px; background: #010d12; color: #f4f4f4; }
.start { display: flex; align-items: center; justify-content: center; width: 48px; background: #000; }
.start svg { width: 16px; height: 16px; }
.cortana { display: flex; align-items: center; flex: 0 0 344px; padding: 0 14px 0 9px; gap: 5px; background: #333; }
.cortana svg { width: 22px; height: 22px; }
.cortana .mic { width: 12px; height: 18px; }
.cortana input { flex: 1; min-width: 0; font-size: 14px; }
.cortana input::placeholder { color: #999; opacity: 1; }
.apps { display: flex; gap: 2px; }
.apps button { display: flex; align-items: center; justify-content: center; width: 48px; border-bottom: 2px solid transparent; }
.apps svg { width: 24px; height: 24px; }
.apps .on { width: 42px; margin: 0 3px; border-bottom-color: #76b9ed; }
.apps .now { width: 48px; margin: 0; background: #343f44; }
.tray { display: flex; align-items: center; margin-left: auto; gap: 8px; text-align: center; height: 40px; }
.cpu, .clock { white-space: nowrap; line-height: 18px; }
.cpu { margin-right: 10px; }
.tray .kb { width: 24px; height: 14px; }
.ime { width: 16px; font: 16px/20px "Noto Sans", sans-serif; }
.clock { margin-left: 8px; }
.note { position: relative; width: 44px; height: 40px; padding: 8px 0 0 8px; background: #000; }
.note svg { width: 30px; height: 30px; }
.note span { position: absolute; left: 15px; top: 18px; width: 21px; height: 17px; border: 1px solid #999; border-radius: 9px; background: #222; color: #fff; font: bold 12px/15px "Noto Sans", sans-serif; }
.peek { align-self: stretch; width: 5px; border-left: 1px solid #555; background: #000; }

.ball { position: absolute; left: 918px; top: -29px; width: 48px; height: 48px; padding-top: 25px; border: 2px solid #999; border-radius: 50%; background: #3cc060; box-shadow: inset 0 0 0 1px #e0f4e4; color: #fff; font-weight: 700; line-height: 18px; text-align: center; }
.imebar { position: absolute; left: 1001px; top: 3px; display: flex; align-items: center; height: 24px; gap: 6px; padding-right: 2px; background: linear-gradient(#fff, #fff) 14px 0 no-repeat; border: 1px solid #b0c4dc; border-left: 0; }
.imebar .logo { width: 28px; height: 28px; }
```
